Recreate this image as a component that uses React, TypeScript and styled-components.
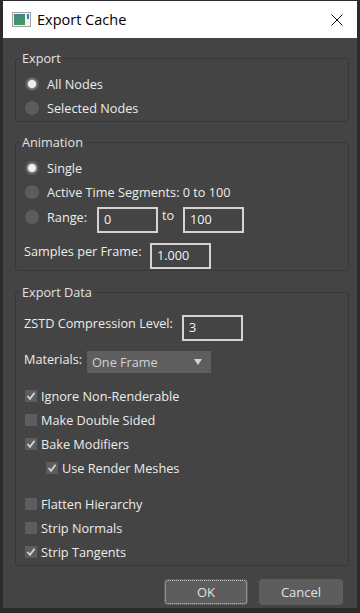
import styled, { createGlobalStyle } from "styled-components";

const GlobalStyle = createGlobalStyle`
  html, body {
    margin: 0;
    padding: 0;
    background: #2b2b2b;
  }
  body {
    font-family: "Open Sans", "Noto Sans", "Liberation Sans", sans-serif;
    font-size: 12.7px;
    color: #ececec;
  }
`;

type CheckItem = { label: string; checked: boolean; indent?: boolean; gapBefore?: boolean };

const checkItems: CheckItem[] = [
  { label: "Ignore Non-Renderable", checked: true },
  { label: "Make Double Sided", checked: false },
  { label: "Bake Modifiers", checked: true },
  { label: "Use Render Meshes", checked: true, indent: true },
  { label: "Flatten Hierarchy", checked: false, gapBefore: true },
  { label: "Strip Normals", checked: false },
  { label: "Strip Tangents", checked: true },
];

const TitleIcon = () => (
  <svg width="19" height="15" viewBox="0 0 19 15">
    <defs>
      <linearGradient id="ti" x1="0" y1="0" x2="0.4" y2="1">
        <stop offset="0" stopColor="#4b7f93" />
        <stop offset="1" stopColor="#3f9a62" />
      </linearGradient>
    </defs>
    <rect x="0.5" y="0.5" width="18" height="14" fill="#f2f2f2" stroke="#a3a3a3" />
    <rect x="2" y="2" width="11" height="11" fill="url(#ti)" />
    <rect x="15" y="2" width="2" height="5" fill="#3b78c4" />
  </svg>
);

const CloseIcon = () => (
  <svg width="12" height="12" viewBox="0 0 12 12">
    <path d="M0.5 0.5 L11.5 11.5 M11.5 0.5 L0.5 11.5" stroke="#111" strokeWidth="1" />
  </svg>
);

const Tick = () => (
  <svg width="10" height="10" viewBox="0 0 10 10">
    <path d="M1.5 5 L4 7.8 L8.6 1.8" fill="none" stroke="#d6d6d6" strokeWidth="1.8" />
  </svg>
);

export default function App() {
  return (
    <Screen>
      <GlobalStyle />
      <Window>
        <TitleBar>
          <TitleIcon />
          <TitleText>Export Cache</TitleText>
          <CloseButton>
            <CloseIcon />
          </CloseButton>
        </TitleBar>

        <Body>
          <Group $gap={12}>
            <GroupTitle>Export</GroupTitle>
            <GroupContent>
              <RadioRow>
                <Radio $on />
                <span>All Nodes</span>
              </RadioRow>
              <RadioRow>
                <Radio />
                <span>Selected Nodes</span>
              </RadioRow>
            </GroupContent>
          </Group>

          <Group $gap={12}>
            <GroupTitle>Animation</GroupTitle>
            <GroupContent>
              <RadioRow>
                <Radio $on />
                <span>Single</span>
              </RadioRow>
              <RadioRow>
                <Radio />
                <span>Active Time Segments: 0 to 100</span>
              </RadioRow>
              <FieldRow $gap={3}>
                <RadioRow $compact>
                  <Radio />
                  <span>Range:</span>
                </RadioRow>
                <Field>0</Field>
                <InlineText>to</InlineText>
                <Field>100</Field>
              </FieldRow>
              <FieldRow $gap={10}>
                <FieldLabel $width={126}>Samples per Frame:</FieldLabel>
                <Field>1.000</Field>
              </FieldRow>
            </GroupContent>
          </Group>

          <Group $gap={13}>
            <GroupTitle>Export Data</GroupTitle>
            <GroupContent>
              <FieldRow $gap={9}>
                <FieldLabel $width={158}>ZSTD Compression Level:</FieldLabel>
                <Field>3</Field>
              </FieldRow>
              <FieldRow $gap={10}>
                <FieldLabel $width={63}>Materials:</FieldLabel>
                <Dropdown>
                  <span>One Frame</span>
                  <Arrow />
                </Dropdown>
              </FieldRow>
              <CheckList>
                {checkItems.map((item) => (
                  <CheckRow key={item.label} $indent={item.indent} $gapBefore={item.gapBefore}>
                    <CheckBox>{item.checked && <Tick />}</CheckBox>
                    <span>{item.label}</span>
                  </CheckRow>
                ))}
              </CheckList>
            </GroupContent>
          </Group>

          <ButtonRow>
            <Button $focused>OK</Button>
            <Button>Cancel</Button>
          </ButtonRow>
        </Body>
      </Window>
    </Screen>
  );
}

const Screen = styled.div`
  height: 613px;
  box-sizing: border-box;
  padding: 1px 3px 5px 3px;
`;

const Window = styled.div`
  height: 100%;
  display: flex;
  flex-direction: column;
  background: #444444;
`;

const TitleBar = styled.div`
  height: 37px;
  flex-shrink: 0;
  display: flex;
  align-items: center;
  padding: 0 14px 0 9px;
  background: #ffffff;
  color: #000;
`;

const TitleText = styled.div`
  flex: 1;
  margin-left: 6px;
  font-family: "Open Sans", "Noto Sans", sans-serif;
  font-size: 14.5px;
  line-height: 20px;
`;

const CloseButton = styled.div`
  display: flex;
  width: 12px;
  height: 12px;
`;

const Body = styled.div`
  flex: 1;
  display: flex;
  flex-direction: column;
  padding: 0 8px 0 12px;
`;

const Group = styled.fieldset<{ $gap: number }>`
  margin: ${(p) => p.$gap}px 0 0 0;
  padding: 0;
  min-width: 0;
  border: 1px solid #383838;
  border-radius: 3px;
`;

const GroupTitle = styled.legend`
  margin-left: 4px;
  padding: 0 2px;
  line-height: 16px;
  color: #e2e2e2;
`;

const GroupContent = styled.div`
  display: flex;
  flex-direction: column;
  padding: 6px 0 1px 9px;
`;

const RadioRow = styled.div<{ $compact?: boolean }>`
  display: flex;
  align-items: center;
  gap: 8px;
  height: ${(p) => (p.$compact ? 20 : 24)}px;
  width: ${(p) => (p.$compact ? "72px" : "auto")};
  flex-shrink: 0;
`;

const Radio = styled.span<{ $on?: boolean }>`
  width: 14px;
  height: 14px;
  border-radius: 50%;
  box-sizing: border-box;
  flex-shrink: 0;
  background: ${(p) => (p.$on ? "radial-gradient(circle, #eeeeee 0 3.5px, #8a8a8a 4.5px, #5e5e5e 5.5px)" : "#5c5c5c")};
`;

const FieldRow = styled.div<{ $gap: number }>`
  display: flex;
  align-items: flex-start;
  margin-top: ${(p) => p.$gap}px;
`;

const FieldLabel = styled.div<{ $width: number }>`
  width: ${(p) => p.$width}px;
  margin-left: -1px;
  flex-shrink: 0;
  line-height: 16px;
`;

const InlineText = styled.div`
  width: 25px;
  box-sizing: border-box;
  padding-left: 4px;
  line-height: 16px;
`;

const Field = styled.div`
  width: 61px;
  height: 26px;
  box-sizing: border-box;
  flex-shrink: 0;
  border: 2px solid #d4d4d4;
  padding: 2px 0 0 5px;
  line-height: 16px;
  color: #f2f2f2;
`;

const Dropdown = styled.div`
  width: 124px;
  height: 22px;
  box-sizing: border-box;
  display: flex;
  align-items: center;
  justify-content: space-between;
  padding: 0 9px 0 5px;
  background: #5e5e5e;
  color: #d2d2d2;
`;

const Arrow = styled.span`
  width: 0;
  height: 0;
  border-left: 4px solid transparent;
  border-right: 4px solid transparent;
  border-top: 6px solid #d4d4d4;
`;

const CheckList = styled.div`
  display: flex;
  flex-direction: column;
  margin-top: 11px;
`;

const CheckRow = styled.div<{ $indent?: boolean; $gapBefore?: boolean }>`
  display: flex;
  align-items: center;
  gap: 4px;
  height: 24px;
  margin-left: ${(p) => (p.$indent ? 21 : 0)}px;
  margin-top: ${(p) => (p.$gapBefore ? 12 : 0)}px;
`;

const CheckBox = styled.span`
  width: 12px;
  height: 12px;
  display: flex;
  align-items: center;
  justify-content: center;
  flex-shrink: 0;
  background: #5d5d5d;
`;

const ButtonRow = styled.div`
  display: flex;
  justify-content: flex-end;
  gap: 11px;
  margin: 13px 6px 0 0;
`;

const Button = styled.div<{ $focused?: boolean }>`
  width: 84px;
  height: 26px;
  display: flex;
  align-items: center;
  justify-content: center;
  border-radius: 4px;
  background: #5d5d5d;
  color: #e2e2e2;
  font-size: 13px;
  outline: ${(p) => (p.$focused ? "1px dotted #c8c8c8" : "none")};
  outline-offset: -2px;
`;
